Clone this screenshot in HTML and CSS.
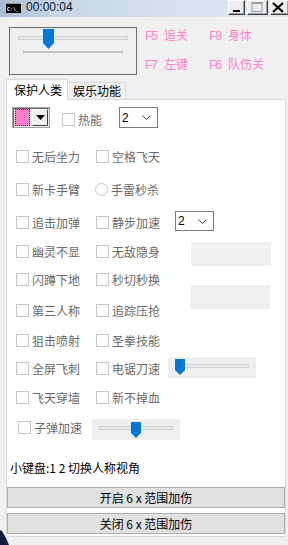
FILE: index.html
```html
<!DOCTYPE html>
<html lang="zh-CN">
<head>
<meta charset="utf-8">
<title>00:00:04</title>
<link rel="stylesheet" href="styles.css">
</head>
<body>
<div class="win">
  <div class="titlebar">
    <span class="app-icon">
      <svg width="15" height="10" viewBox="0 0 15 10"><rect x="0" y="0" width="15" height="10" fill="#000"/><rect x="0" y="0" width="15" height="1" fill="#9a9a9a"/><text x="1" y="7.5" font-family="Liberation Mono, monospace" font-size="6" font-weight="bold" fill="#fff" textLength="12" lengthAdjust="spacingAndGlyphs">C:\_</text></svg>
    </span>
    <span class="title">00:00:04</span>
    <div class="wbtns">
      <span class="wb min"><svg width="17" height="15" viewBox="0 0 17 15"><rect x="5" y="10" width="7" height="2" fill="#000"/></svg></span>
      <span class="wb max"><svg width="21" height="15" viewBox="0 0 21 15"><rect x="5" y="2.5" width="10" height="9" fill="none" stroke="#a0a0a0" stroke-width="1"/><rect x="5" y="2" width="11" height="2" fill="#a0a0a0"/></svg></span>
      <span class="wb close"><svg width="18" height="15" viewBox="0 0 18 15"><path d="M3 3L13 12M13 3L3 12" stroke="#000" stroke-width="2.2"/></svg></span>
    </div>
  </div>

  <div class="top">
    <div class="group">
      <div class="gtrack">
        <span class="gthumb"><svg width="11" height="20" viewBox="0 0 11 20"><path d="M0 0H11V14L5.5 20L0 14Z" fill="#0078d7"/></svg></span>
      </div>
      <div class="ticks"></div>
    </div>
    <div class="fkeys">
      <span class="fk"><span class="key">F5</span>追关</span>
      <span class="fk"><span class="key">F8</span>身体</span>
      <span class="fk"><span class="key">F7</span>左键</span>
      <span class="fk"><span class="key">F6</span>队伤关</span>
    </div>
  </div>

  <div class="tabs">
    <div class="tab active">保护人类</div>
    <div class="tab">娱乐功能</div>
  </div>

  <div class="panel">
    <div class="rows">
      <div class="row pick h37">
        <div class="picker">
          <span class="swatch"></span>
          <span class="drop"><svg width="9" height="5" viewBox="0 0 9 5"><path d="M0 0H9L4.5 5Z" fill="#000"/></svg></span>
        </div>
        <label class="cb heat"><span class="box"></span>热能</label>
        <div class="sel sel1">2<svg class="chev" width="9" height="5" viewBox="0 0 9 5"><path d="M0.5 0.5L4.5 4.5L8.5 0.5" fill="none" stroke="#444" stroke-width="1"/></svg></div>
      </div>

      <div class="row h33">
        <label class="cb c1"><span class="box"></span>无后坐力</label>
        <label class="cb c2"><span class="box"></span>空格飞天</label>
      </div>

      <div class="row h33">
        <label class="cb c1"><span class="box"></span>新卡手臂</label>
        <label class="cb c2 radio"><span class="box round"></span>手雷秒杀</label>
      </div>

      <div class="row h29">
        <label class="cb c1"><span class="box"></span>追击加弹</label>
        <label class="cb c2"><span class="box"></span>静步加速</label>
        <div class="sel sel2">2<svg class="chev" width="9" height="5" viewBox="0 0 9 5"><path d="M0.5 0.5L4.5 4.5L8.5 0.5" fill="none" stroke="#444" stroke-width="1"/></svg></div>
      </div>

      <div class="row h28">
        <label class="cb c1"><span class="box"></span>幽灵不显</label>
        <label class="cb c2"><span class="box"></span>无敌隐身</label>
        <div class="blank blank-a"></div>
      </div>

      <div class="row h31">
        <label class="cb c1"><span class="box"></span>闪蹲下地</label>
        <label class="cb c2"><span class="box"></span>秒切秒换</label>
        <div class="blank blank-b"></div>
      </div>

      <div class="row h30">
        <label class="cb c1"><span class="box"></span>第三人称</label>
        <label class="cb c2"><span class="box"></span>追踪压抢</label>
      </div>

      <div class="row h28">
        <label class="cb c1"><span class="box"></span>狙击喷射</label>
        <label class="cb c2"><span class="box"></span>圣拳技能</label>
      </div>

      <div class="row h29">
        <label class="cb c1"><span class="box"></span>全屏飞刺</label>
        <label class="cb c2 narrow"><span class="box"></span>电锯刀速</label>
        <div class="hs hs-a">
          <div class="htrack"></div>
          <span class="hthumb"><svg width="10" height="16" viewBox="0 0 10 16"><path d="M0 0H10V11L5 16L0 11Z" fill="#0078d7"/></svg></span>
        </div>
      </div>

      <div class="row h30">
        <label class="cb c1"><span class="box"></span>飞天穿墙</label>
        <label class="cb c2"><span class="box"></span>新不掉血</label>
      </div>

      <div class="row h40">
        <label class="cb c1 shift"><span class="box"></span>子弹加速</label>
        <div class="hs hs-b">
          <div class="htrack"></div>
          <span class="hthumb"><svg width="10" height="16" viewBox="0 0 10 16"><path d="M0 0H10V11L5 16L0 11Z" fill="#0078d7"/></svg></span>
        </div>
      </div>

      <div class="note">小键盘:1 2 切换人称视角</div>
    </div>

    <button class="btn first">开启 6 x 范围加伤</button>
    <button class="btn">关闭 6 x 范围加伤</button>
  </div>

  <div class="desk">
    <svg width="10" height="15" viewBox="0 0 10 15"><path d="M0 0L2 1L6 8L9 15H0Z" fill="#0b1d3f"/></svg>
  </div>
</div>
</body>
</html>
```

FILE: styles.css
```css
* { box-sizing: border-box; }
html, body { margin: 0; padding: 0; }
body {
  width: 288px;
  height: 545px;
  overflow: hidden;
  background: #f0f0f0;
  font-family: "Noto Sans CJK SC", "Liberation Sans", sans-serif;
  font-size: 12px;
}
.win {
  position: relative;
  width: 288px;
  height: 545px;
  background: #f0f0f0;
}

/* title bar */
.titlebar {
  height: 17px;
  display: flex;
  align-items: flex-start;
  background: linear-gradient(to right, #a9bbd0 0%, #c6d4e3 18%, #d8e2ed 60%, #dde6f0 100%);
}
.app-icon {
  margin: 3px 0 0 6px;
  width: 15px;
  height: 10px;
  display: block;
  line-height: 0;
}
.title {
  margin-left: 5px;
  font-family: "Liberation Sans", sans-serif;
  font-size: 12px;
  line-height: 14px;
  color: #0e1630;
}
.wbtns {
  margin-left: auto;
  display: flex;
  gap: 2px;
}
.wb {
  display: block;
  height: 15px;
  background: #ececec;
  border-top: 1px solid #ffffff;
  border-left: 1px solid #ffffff;
  border-right: 1px solid #404040;
  border-bottom: 1px solid #404040;
  box-shadow: inset -1px -1px 0 #a0a0a0;
  line-height: 0;
  overflow: hidden;
}
.wb svg { margin: -1px 0 0 -1px; }
.wb.min { width: 17px; }
.wb.max { width: 21px; }
.wb.close { width: 18px; border-right: none; }

/* top */
.top {
  display: flex;
  padding: 10px 0 0 9px;
}
.group {
  width: 128px;
  height: 48px;
  border: 1px solid #6e6e6e;
  padding: 8px 0 0 8px;
}
.gtrack {
  position: relative;
  width: 110px;
  height: 4px;
  background: #e6e8e8;
  border: 1px solid #d3d3d3;
}
.gthumb {
  position: absolute;
  left: 24px;
  top: -8px;
  line-height: 0;
}
.ticks {
  margin: 10px 0 0 5px;
  width: 100px;
  height: 3px;
  border-left: 1px solid #c4c4c4;
  border-right: 1px solid #c4c4c4;
  background: linear-gradient(#c4c4c4, #c4c4c4) left bottom / 100% 2px no-repeat;
}
.fkeys {
  margin: 1px 0 0 8px;
  display: grid;
  grid-template-columns: 64px auto;
  row-gap: 13px;
  align-content: start;
}
.fk {
  font-family: "Noto Sans CJK SC", sans-serif;
  font-size: 12px;
  line-height: 14px;
  color: #ff80c8;
  white-space: pre;
}
.key {
  font-family: "Liberation Mono", monospace;
  font-size: 12px;
  letter-spacing: -1.2px;
  margin-right: 7px;
}

/* tabs */
.tabs {
  margin-top: 4px;
  padding-left: 6px;
  display: flex;
  align-items: flex-start;
  height: 20px;
  position: relative;
  z-index: 1;
}
.tab {
  color: #000;
  font-size: 12px;
  line-height: 15px;
  border: 1px solid #d9d9d9;
  border-bottom: none;
}
.tab.active {
  width: 62px;
  height: 21px;
  background: #ffffff;
  padding: 2px 0 0 7px;
}
.tab:not(.active) {
  margin-top: 3px;
  width: 58px;
  height: 17px;
  background: #f0f0f0;
  border-left: none;
  padding: 0 0 0 5px;
  border-bottom: none;
}

/* panel */
.panel {
  margin-left: 6px;
  width: 280px;
  height: 438px;
  background: #ffffff;
  border: 1px solid #d9d9d9;
  padding: 0 0 2px 0;
  display: flex;
  flex-direction: column;
}
.rows {
  padding-top: 5px;
}
.row {
  display: flex;
  align-items: flex-start;
  padding-left: 9px;
}
.row.pick { padding-left: 5px; }
.h28 { height: 28px; }
.h29 { height: 29px; }
.h30 { height: 30px; }
.h31 { height: 31px; }
.h33 { height: 33px; }
.h37 { height: 37px; }
.h40 { height: 40px; }

.cb {
  display: flex;
  align-items: center;
  height: 28px;
  color: #6a6a6a;
  font-size: 12px;
  white-space: nowrap;
}
.box {
  width: 13px;
  height: 13px;
  border: 1px solid #c6c6c6;
  background: #fff;
  margin-right: 3px;
  flex: none;
}
.box.round { border-radius: 50%; }
.c1 { width: 80px; }
.c2 { width: 79px; }
.c2.radio { margin-left: -1px; }
.c2.narrow { width: 72px; }
.c1.shift { margin-left: 2px; width: 72px; }

/* colour picker */
.picker {
  margin-top: 2px;
  width: 38px;
  height: 21px;
  border: 1px solid #a0a0a0;
  box-shadow: inset 1px 1px 0 #696969;
  display: flex;
  align-items: stretch;
  padding: 1px 1px 1px 2px;
  background: #f0f0f0;
}
.swatch {
  width: 15px;
  background: #ff80c8;
  border: 1px dotted #1a3a1a;
}
.drop {
  margin-left: 2px;
  width: 16px;
  background: #f0f0f0;
  border-top: 1px solid #fff;
  border-left: 1px solid #fff;
  border-right: 1px solid #404040;
  border-bottom: 1px solid #404040;
  display: flex;
  align-items: center;
  justify-content: center;
}
.cb.heat { margin-left: 12px; width: 57px; }

.sel {
  display: flex;
  align-items: center;
  width: 39px;
  height: 21px;
  border: 1px solid #7a7a7a;
  background: #fff;
  padding-left: 2px;
  font-family: "Liberation Sans", sans-serif;
  font-size: 12px;
  color: #000;
}
.sel1 { margin-top: 2px; }
.sel2 { margin-top: 3px; height: 20px; }
.chev { margin-left: auto; margin-right: 6px; }

.blank {
  width: 80px;
  height: 24px;
  background: #efefef;
}
.blank-a { margin: 5px 0 0 16px; }
.blank-b { margin: 20px 0 0 15px; }

.hs {
  position: relative;
  width: 88px;
  height: 21px;
  background: #efefef;
}
.hs-a { margin-top: 3px; }
.hs-b { margin: 6px 0 0 2px; }
.htrack {
  margin: 7px 0 0 8px;
  width: 73px;
  height: 4px;
  background: #e6e8e8;
  border: 1px solid #d3d3d3;
}
.hthumb {
  position: absolute;
  line-height: 0;
}
.hs-a .hthumb { left: 7px; top: 2px; }
.hs-b .hthumb { left: 39px; top: 3px; }
.hs-b .htrack { margin-left: 7px; width: 74px; }

.note {
  height: 28px;
  display: flex;
  align-items: center;
  padding-left: 3px;
  color: #000;
  font-size: 12px;
}

.btn {
  margin: 5px 0 0 0;
  width: 278px;
  height: 21px;
  padding: 0;
  background: #e1e1e1;
  border: 1px solid #adadad;
  font-family: "Noto Sans CJK SC", "Liberation Sans", sans-serif;
  font-size: 12px;
  line-height: 17px;
  color: #000;
}
.btn.first { margin-top: 6px; }

.desk {
  position: absolute;
  left: 0;
  top: 530px;
  line-height: 0;
}
```
